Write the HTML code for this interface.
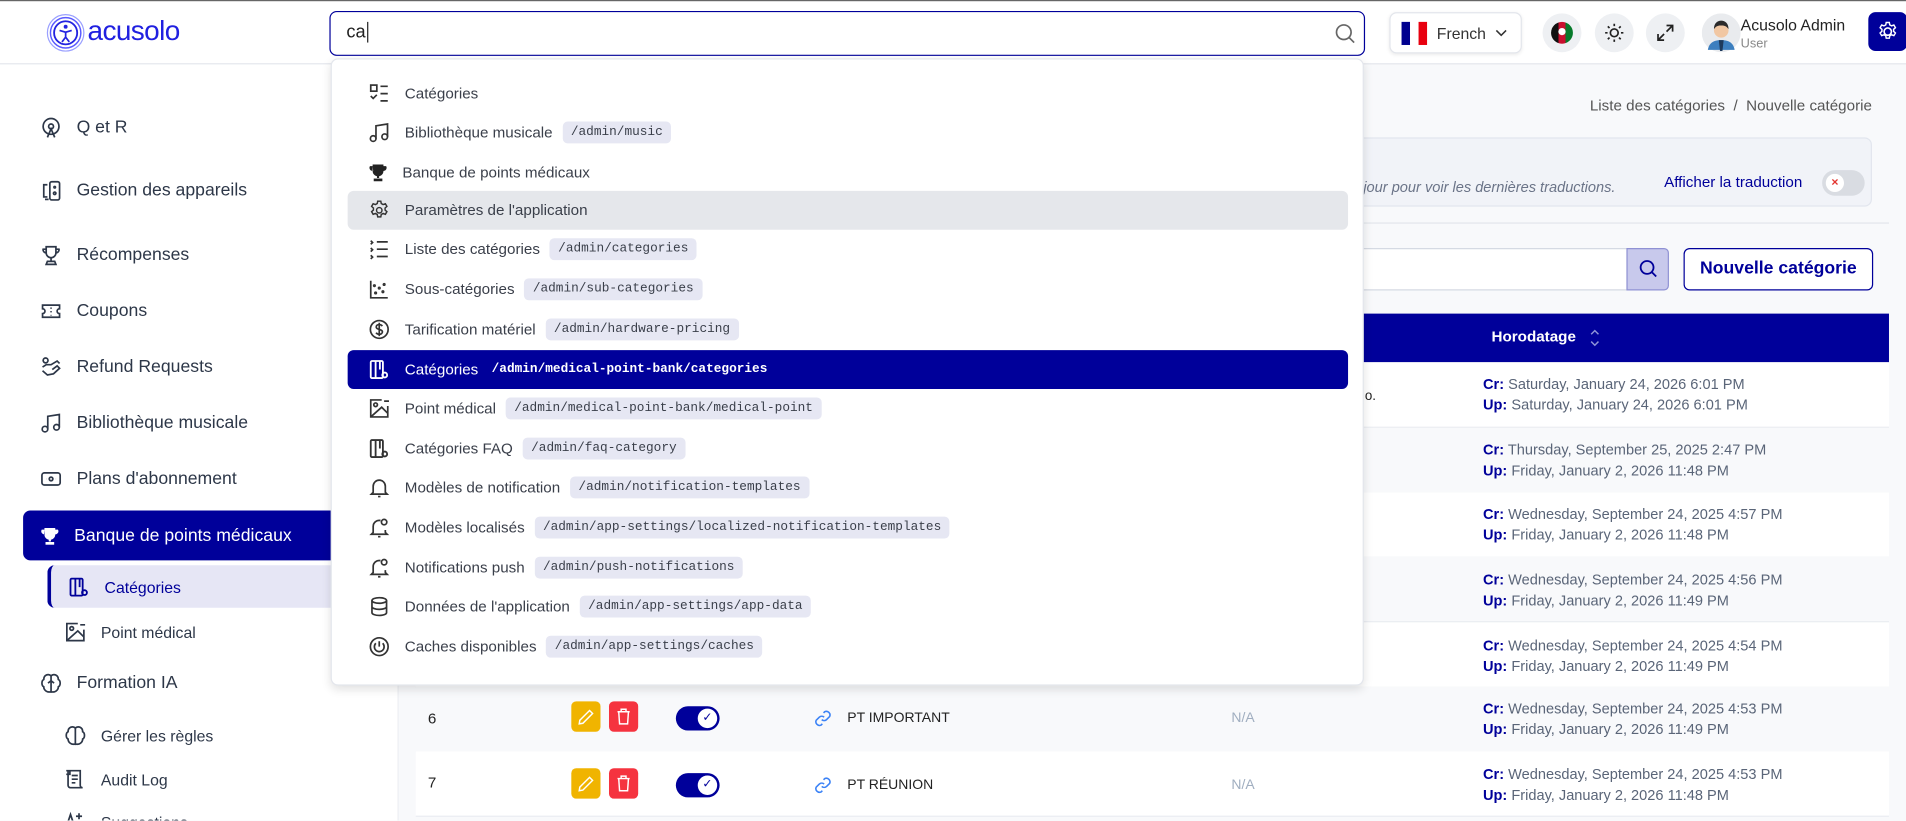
<!DOCTYPE html>
<html><head><meta charset="utf-8">
<style>
*{box-sizing:border-box;margin:0;padding:0}
html,body{width:1906px;height:821px;overflow:hidden;background:#f8f9fb}
#w{position:absolute;left:0;top:0;width:1568px;height:675px;transform:scale(1.21556);transform-origin:0 0;font-family:"Liberation Sans",sans-serif;color:#2d3748;background:#f8f9fb;overflow:hidden}
.abs{position:absolute}
svg{display:block}
.hdr{left:0;top:0;width:1568px;height:53px;background:#fff;border-bottom:1px solid #e3e6ec;border-top:1px solid #666}
.side{left:0;top:53px;width:328px;height:622px;background:#fff;border-right:1px solid #eceef2}
.si{position:absolute;left:33px;display:flex;align-items:center;font-size:14.5px;color:#2d3748;height:20px}
.si svg{margin-right:12px}
.dd{left:272px;top:48px;width:850px;height:516px;background:#fff;border:1px solid #e3e6ec;border-radius:6px;box-shadow:0 3px 8px rgba(0,0,0,.12)}
.it{position:absolute;left:13px;width:823px;height:32px;display:flex;align-items:center;padding-left:17px;font-size:12.5px;color:#3a3f4a;border-radius:5px}
.it svg{margin-right:12px;flex:none}
.bd{margin-left:8px;background:#e6e7f3;border-radius:4px;padding:3px 7px;font-family:"Liberation Mono",monospace;font-size:10.5px;color:#3a3f4a}
.row{position:absolute;left:342px;width:1212px;height:54px;border-bottom:1px solid #e9ecf1}
.ts{position:absolute;left:878px;font-size:12px;color:#5a6578;line-height:17px}
.ts b{color:#00009a}
</style></head><body><div id="w">
<!-- header -->
<div class="abs hdr">
 <svg class="abs" style="left:38px;top:10px" width="32" height="32" viewBox="0 0 32 32"><circle cx="16" cy="16" r="15" fill="none" stroke="#9aa0ff" stroke-width="1"/><circle cx="16" cy="16" r="12.5" fill="none" stroke="#5a5aff" stroke-width="1.2"/><circle cx="16" cy="16" r="9.5" fill="none" stroke="#2323e0" stroke-width="1.5"/><circle cx="16" cy="11" r="1.6" fill="#2323e0"/><path d="M11 14l5 1.5 5-1.5M16 15.5v4l-3 4M16 19.5l3 4" stroke="#2323e0" stroke-width="1.4" fill="none"/></svg>
 <div class="abs" style="left:72px;top:11px;font-size:23px;color:#2020e0;letter-spacing:-.5px">acusolo</div>
</div>
<div class="abs" style="left:271px;top:9px;width:852px;height:37px;border:1.5px solid #00009a;border-radius:6px;background:#fff">
 <div class="abs" style="left:13px;top:8px;font-size:15px;color:#222">ca<span style="border-left:1px solid #222;margin-left:1px"></span></div>
 <svg class="abs" style="left:826px;top:9px" width="17" height="17" viewBox="0 0 17 17"><circle cx="7.5" cy="7.5" r="6" fill="none" stroke="#666" stroke-width="1.4"/><path d="M12 12l4 4" stroke="#666" stroke-width="1.4"/></svg>
</div>
<div class="abs" style="left:1143px;top:10px;width:109px;height:34px;border:1px solid #e3e6ec;border-radius:6px;background:#fff;box-shadow:0 1px 3px rgba(0,0,0,.08)">
 <div class="abs" style="left:9px;top:7px;width:7px;height:19px;background:#00008f"></div>
 <div class="abs" style="left:16px;top:7px;width:7px;height:19px;background:#fff"></div>
 <div class="abs" style="left:23px;top:7px;width:7px;height:19px;background:#e8000f"></div>
 <div class="abs" style="left:38px;top:9px;font-size:13px;color:#333">French</div>
 <svg class="abs" style="left:86px;top:12px" width="10" height="8" viewBox="0 0 10 8"><path d="M1 2l4 4 4-4" stroke="#333" stroke-width="1.3" fill="none"/></svg>
</div>
<div class="abs" style="left:1269px;top:11px;width:32px;height:32px;border-radius:50%;background:#eef0f3"></div>
<div class="abs" style="left:1276px;top:18px;width:18px;height:18px;border-radius:50%;background:linear-gradient(90deg,#111 0 33%,#c8102e 33% 66%,#067a2a 66%)"></div>
<div class="abs" style="left:1282px;top:23px;width:6px;height:6px;border-radius:50%;background:#fff"></div>
<div class="abs" style="left:1312px;top:11px;width:32px;height:32px;border-radius:50%;background:#eef0f3"></div>
<svg class="abs" style="left:1319px;top:18px" width="18" height="18" viewBox="0 0 18 18"><circle cx="9" cy="9" r="3.2" fill="none" stroke="#222" stroke-width="1.4"/><path d="M9 1.5v2M9 14.5v2M1.5 9h2M14.5 9h2M3.7 3.7l1.4 1.4M12.9 12.9l1.4 1.4M3.7 14.3l1.4-1.4M12.9 5.1l1.4-1.4" stroke="#222" stroke-width="1.4"/></svg>
<div class="abs" style="left:1354px;top:11px;width:32px;height:32px;border-radius:50%;background:#eef0f3"></div>
<svg class="abs" style="left:1362px;top:19px" width="16" height="16" viewBox="0 0 16 16"><path d="M9 2h5v5M14 2L9 7M7 14H2V9M2 14l5-5" stroke="#222" stroke-width="1.4" fill="none"/></svg>
<svg class="abs" style="left:1400px;top:11px" width="32" height="32" viewBox="0 0 32 32"><circle cx="16" cy="16" r="16" fill="#e9ebee"/><path d="M5 30c1-6 5-8 11-8s10 2 11 8z" fill="#3d7fbf"/><path d="M14 22h4l-1 9h-2z" fill="#1e3a5c"/><circle cx="16" cy="14" r="6" fill="#f1c7a3"/><path d="M10 13c0-5 3-7 6-7s6 2 6 7c-2-3-4-3-6-3s-4 0-6 3z" fill="#2b2b2b"/></svg>
<div class="abs" style="left:1432px;top:13px;font-size:13px;color:#222;font-weight:500">Acusolo Admin</div>
<div class="abs" style="left:1432px;top:30px;font-size:10.5px;color:#888">User</div>
<div class="abs" style="left:1537px;top:10px;width:32px;height:32px;border-radius:6px;background:#00009a"></div>
<svg class="abs" style="left:1544px;top:17px" width="18" height="18" viewBox="0 0 24 24"><path d="M12 8a4 4 0 100 8 4 4 0 000-8z" fill="none" stroke="#fff" stroke-width="1.8"/><path d="M10.3 2h3.4l.5 2.6 2 1.1 2.5-.9 1.7 2.9-2 1.8v2.2l2 1.8-1.7 2.9-2.5-.9-2 1.1-.5 2.6h-3.4l-.5-2.6-2-1.1-2.5.9-1.7-2.9 2-1.8v-2.2l-2-1.8 1.7-2.9 2.5.9 2-1.1z" fill="none" stroke="#fff" stroke-width="1.6"/></svg>

<!-- sidebar -->
<div class="abs side"></div>
<div class="si" style="top:95px"><svg width="18" height="18" viewBox="0 0 18 18" fill="none" stroke="#2d3748" stroke-width="1.4"><circle cx="9" cy="8" r="6.5"/><circle cx="9" cy="8" r="2"/><path d="M6 17l3-7 3 7"/></svg>Q et R</div>
<div class="si" style="top:147px"><svg width="18" height="18" viewBox="0 0 18 18" fill="none" stroke="#2d3748" stroke-width="1.4"><rect x="8" y="1.5" width="8" height="15" rx="1.5"/><path d="M6 4H3v10h3M4 16h3"/><circle cx="12" cy="11" r="1"/><circle cx="12" cy="6" r=".6"/></svg>Gestion des appareils</div>
<div class="si" style="top:200px"><svg width="18" height="18" viewBox="0 0 18 18" fill="none" stroke="#2d3748" stroke-width="1.4"><path d="M5 2h8v5a4 4 0 01-8 0zM5 4H2.5a2.5 2.5 0 002.7 3M13 4h2.5a2.5 2.5 0 01-2.7 3M9 11v3M5 16.5h8l-1-2.5H6z"/></svg>Récompenses</div>
<div class="si" style="top:246px"><svg width="18" height="18" viewBox="0 0 18 18" fill="none" stroke="#2d3748" stroke-width="1.4"><path d="M2 4h14v3a2 2 0 000 4v3H2v-3a2 2 0 000-4z"/><path d="M9 6v1M9 9v1M9 12v.5"/></svg>Coupons</div>
<div class="si" style="top:292px"><svg width="18" height="18" viewBox="0 0 18 18" fill="none" stroke="#2d3748" stroke-width="1.4"><circle cx="4.5" cy="3.5" r="2"/><path d="M2 12l4 3.5 5-1 5-4.5-2-2-4 3M2 9l3-2h4l5-3 2 2"/></svg>Refund Requests</div>
<div class="si" style="top:338px"><svg width="18" height="18" viewBox="0 0 18 18" fill="none" stroke="#2d3748" stroke-width="1.4"><circle cx="4" cy="14" r="2.3"/><circle cx="13.5" cy="12.5" r="2.3"/><path d="M6.3 14V3.5L15.8 2v10.5"/></svg>Bibliothèque musicale</div>
<div class="si" style="top:384px"><svg width="18" height="18" viewBox="0 0 18 18" fill="none" stroke="#2d3748" stroke-width="1.4"><rect x="1.5" y="4" width="15" height="10" rx="2"/><circle cx="9" cy="9" r="1.5"/><path d="M5 9h.1M13 9h.1"/></svg>Plans d'abonnement</div>
<div class="abs" style="left:19px;top:420px;width:310px;height:41px;background:#00009a;border-radius:6px 0 0 6px"></div>
<div class="si" style="top:431px;left:33px;color:#fff;font-size:14.5px"><svg width="16" height="16" viewBox="0 0 18 18" fill="#fff"><path d="M4 1.5h10v6a5 5 0 01-10 0zM4 3H1.5a3 3 0 003 4.5M14 3h2.5a3 3 0 01-3 4.5"/><rect x="8" y="11" width="2" height="3"/><rect x="5" y="14.5" width="8" height="2.5"/></svg>Banque de points médicaux</div>
<div class="abs" style="left:39px;top:465px;width:290px;height:35px;background:#e6e6f5;border-left:3px solid #00009a;border-radius:6px 0 0 6px"></div>
<div class="si" style="top:473px;left:56px;color:#00009a;font-size:13px"><svg width="18" height="18" viewBox="0 0 18 18" fill="none" stroke="#00009a" stroke-width="1.5"><rect x="2" y="2" width="10" height="14" rx="1"/><path d="M6 2v14M9.5 2v7"/><circle cx="13.5" cy="13.5" r="2"/></svg>Catégories</div>
<div class="si" style="top:510px;left:53px;font-size:13px"><svg width="18" height="18" viewBox="0 0 18 18" fill="none" stroke="#2d3748" stroke-width="1.4"><path d="M11 2H2v14h14V7M13 3h4"/><circle cx="6" cy="6" r="1.5"/><path d="M2 16l9-8 5 5"/></svg>Point médical</div>
<div class="si" style="top:552px"><svg width="18" height="18" viewBox="0 0 18 18" fill="none" stroke="#2d3748" stroke-width="1.4"><path d="M9 2v15M9 3c-2-2-6-1-6 3-2 1-2 5 0 6 0 3 3 5 6 4M9 3c2-2 6-1 6 3 2 1 2 5 0 6 0 3-3 5-6 4M6.5 9L9 7l2.5 2"/></svg>Formation IA</div>
<div class="si" style="top:595px;left:53px;font-size:13px"><svg width="18" height="18" viewBox="0 0 18 18" fill="none" stroke="#2d3748" stroke-width="1.4"><path d="M9 2v15M9 3c-2-2-6-1-6 3-2 1-2 5 0 6 0 3 3 5 6 4M9 3c2-2 6-1 6 3 2 1 2 5 0 6 0 3-3 5-6 4"/></svg>Gérer les règles</div>
<div class="si" style="top:631px;left:53px;font-size:13px"><svg width="18" height="18" viewBox="0 0 18 18" fill="none" stroke="#2d3748" stroke-width="1.4"><path d="M3 2h10v12a2 2 0 002 2H5a2 2 0 01-2-2zM1.5 2h3v3h-3M6 6h5M6 9h5M6 12h3"/></svg>Audit Log</div>
<div class="si" style="top:666px;left:53px;font-size:13px"><svg width="18" height="18" viewBox="0 0 18 18" fill="none" stroke="#2d3748" stroke-width="1.4"><path d="M2 12l3-9 3 9M3 9h4M12 2v5M9.5 4.5h5"/></svg>Suggestions</div>

<!-- main -->
<div class="abs" style="right:28px;top:80px;font-size:12.5px;color:#555;white-space:nowrap">Liste des catégories &nbsp;/&nbsp; Nouvelle catégorie</div>
<div class="abs" style="left:342px;top:113px;width:1198px;height:57px;background:#f1f3f8;border:1px solid #e2e6ee;border-radius:6px">
 <div class="abs" style="right:210px;top:33px;font-size:12px;color:#6b7488;font-style:italic;white-space:nowrap">Cliquez sur le bouton de mise à jour pour voir les dernières traductions.</div>
 <div class="abs" style="left:1026px;top:29px;font-size:12.5px;color:#00009a;font-weight:500">Afficher la traduction</div>
 <div class="abs" style="left:1156px;top:26px;width:35px;height:21px;border-radius:11px;background:#d9dce2"></div>
 <div class="abs" style="left:1159px;top:29px;width:15px;height:15px;border-radius:50%;background:#fff;color:#e3342f;font-size:10px;text-align:center;line-height:15px;font-weight:bold">×</div>
</div>
<div class="abs" style="left:342px;top:183px;width:1212px;height:1px;background:#e3e6ec"></div>
<div class="abs" style="left:342px;top:204px;width:997px;height:35px;background:#fff;border:1px solid #d5dae3;border-radius:4px 0 0 4px"></div>
<div class="abs" style="left:1338px;top:204px;width:35px;height:35px;background:#c8c9ec;border:1px solid #9092d4;border-radius:0 4px 4px 0"></div>
<svg class="abs" style="left:1348px;top:213px" width="16" height="16" viewBox="0 0 16 16"><circle cx="7" cy="7" r="5.3" fill="none" stroke="#00009a" stroke-width="1.5"/><path d="M11 11l3.5 3.5" stroke="#00009a" stroke-width="1.5"/></svg>
<div class="abs" style="left:1385px;top:204px;width:156px;height:35px;background:#fff;border:1.3px solid #00009a;border-radius:5px;color:#00009a;font-weight:bold;font-size:14.5px;text-align:center;line-height:33px">Nouvelle catégorie</div>
<div class="abs" style="left:342px;top:258px;width:1212px;height:40px;background:#00009a">
 <div class="abs" style="left:885px;top:12px;color:#fff;font-weight:bold;font-size:12.5px">Horodatage</div>
 <svg class="abs" style="left:965px;top:11px" width="10" height="18" viewBox="0 0 10 18"><path d="M2 6l3-3 3 3M2 12l3 3 3-3" stroke="#8f94d8" stroke-width="1.2" fill="none"/></svg>
</div>
<div class="row" style="top:298px;background:#fff"><div class="abs" style="right:422px;top:22px;font-size:11px;color:#222;white-space:nowrap">consectetur adipiscing elit o.</div><div class="ts" style="top:10px"><b>Cr:</b> Saturday, January 24, 2026 6:01 PM<br><b>Up:</b> Saturday, January 24, 2026 6:01 PM</div></div>
<div class="row" style="top:352px;background:#f8f9fb"><div class="ts" style="top:10px"><b>Cr:</b> Thursday, September 25, 2025 2:47 PM<br><b>Up:</b> Friday, January 2, 2026 11:48 PM</div></div>
<div class="row" style="top:405px;background:#fff"><div class="ts" style="top:10px"><b>Cr:</b> Wednesday, September 24, 2025 4:57 PM<br><b>Up:</b> Friday, January 2, 2026 11:48 PM</div></div>
<div class="row" style="top:458px;background:#f8f9fb"><div class="ts" style="top:11px"><b>Cr:</b> Wednesday, September 24, 2025 4:56 PM<br><b>Up:</b> Friday, January 2, 2026 11:49 PM</div></div>
<div class="row" style="top:512px;background:#fff"><div class="ts" style="top:11px"><b>Cr:</b> Wednesday, September 24, 2025 4:54 PM<br><b>Up:</b> Friday, January 2, 2026 11:49 PM</div></div>
<div class="row" style="top:565px;background:#f8f9fb">
 <div class="abs" style="left:10px;top:19px;font-size:12.5px;color:#222">6</div>
 <div class="abs" style="left:128px;top:12px;width:24px;height:25px;background:#f0b400;border-radius:4px"></div>
 <svg class="abs" style="left:133px;top:18px" width="14" height="14" viewBox="0 0 14 14"><path d="M10 1.5l2.5 2.5L4.5 12 1.5 12.5 2 9.5z" fill="none" stroke="#fff" stroke-width="1.2"/></svg>
 <div class="abs" style="left:159px;top:12px;width:24px;height:25px;background:#f5333f;border-radius:4px"></div>
 <svg class="abs" style="left:164px;top:17px" width="14" height="15" viewBox="0 0 14 15"><path d="M2 3.5h10M5 3.5V1.5h4v2M3 3.5l.7 10h6.6l.7-10" fill="none" stroke="#fff" stroke-width="1.2"/></svg>
 <div class="abs" style="left:214px;top:16px;width:36px;height:20px;background:#00009a;border-radius:10px"></div>
 <div class="abs" style="left:232px;top:18px;width:16px;height:16px;background:#fff;border-radius:50%;color:#00009a;font-size:10px;text-align:center;line-height:16px">✓</div>
 <svg class="abs" style="left:328px;top:19px" width="14" height="14" viewBox="0 0 14 14"><path d="M6 8a3 3 0 004 0l2.5-2.5a3 3 0 00-4-4L7.5 2.5M8 6a3 3 0 00-4 0L1.5 8.5a3 3 0 004 4l1-1" fill="none" stroke="#3b82f6" stroke-width="1.3"/></svg>
 <div class="abs" style="left:355px;top:20px;font-size:11.5px;color:#222">PT IMPORTANT</div>
 <div class="abs" style="left:671px;top:20px;font-size:11.5px;color:#a0aec0">N/A</div>
 <div class="ts" style="top:10px"><b>Cr:</b> Wednesday, September 24, 2025 4:53 PM<br><b>Up:</b> Friday, January 2, 2026 11:49 PM</div>
</div>
<div class="row" style="top:618px;background:#fff">
 <div class="abs" style="left:10px;top:19px;font-size:12.5px;color:#222">7</div>
 <div class="abs" style="left:128px;top:14px;width:24px;height:25px;background:#f0b400;border-radius:4px"></div>
 <svg class="abs" style="left:133px;top:20px" width="14" height="14" viewBox="0 0 14 14"><path d="M10 1.5l2.5 2.5L4.5 12 1.5 12.5 2 9.5z" fill="none" stroke="#fff" stroke-width="1.2"/></svg>
 <div class="abs" style="left:159px;top:14px;width:24px;height:25px;background:#f5333f;border-radius:4px"></div>
 <svg class="abs" style="left:164px;top:19px" width="14" height="15" viewBox="0 0 14 15"><path d="M2 3.5h10M5 3.5V1.5h4v2M3 3.5l.7 10h6.6l.7-10" fill="none" stroke="#fff" stroke-width="1.2"/></svg>
 <div class="abs" style="left:214px;top:18px;width:36px;height:20px;background:#00009a;border-radius:10px"></div>
 <div class="abs" style="left:232px;top:20px;width:16px;height:16px;background:#fff;border-radius:50%;color:#00009a;font-size:10px;text-align:center;line-height:16px">✓</div>
 <svg class="abs" style="left:328px;top:21px" width="14" height="14" viewBox="0 0 14 14"><path d="M6 8a3 3 0 004 0l2.5-2.5a3 3 0 00-4-4L7.5 2.5M8 6a3 3 0 00-4 0L1.5 8.5a3 3 0 004 4l1-1" fill="none" stroke="#3b82f6" stroke-width="1.3"/></svg>
 <div class="abs" style="left:355px;top:22px;font-size:11.5px;color:#222">PT RÉUNION</div>
 <div class="abs" style="left:671px;top:22px;font-size:11.5px;color:#a0aec0">N/A</div>
 <div class="ts" style="top:11px"><b>Cr:</b> Wednesday, September 24, 2025 4:53 PM<br><b>Up:</b> Friday, January 2, 2026 11:48 PM</div>
</div>

<!-- dropdown -->
<div class="abs dd">
 <div class="it" style="top:12px"><svg width="18" height="18" viewBox="0 0 18 18" fill="none" stroke="#333" stroke-width="1.4"><rect x="2" y="2" width="5" height="5"/><path d="M2 11l2 2 3-3M10 3h6M10 9h6M10 15h6"/></svg>Catégories</div>
 <div class="it" style="top:44px"><svg width="18" height="18" viewBox="0 0 18 18" fill="none" stroke="#333" stroke-width="1.4"><circle cx="4" cy="14" r="2.3"/><circle cx="13.5" cy="12.5" r="2.3"/><path d="M6.3 14V3.5L15.8 2v10.5"/></svg>Bibliothèque musicale<span class="bd">/admin/music</span></div>
 <div class="it" style="top:77px"><svg width="16" height="16" viewBox="0 0 18 18" fill="#222"><path d="M4 1.5h10v6a5 5 0 01-10 0zM4 3H1.5a3 3 0 003 4.5M14 3h2.5a3 3 0 01-3 4.5"/><rect x="8" y="11" width="2" height="3"/><rect x="5" y="14.5" width="8" height="2.5"/></svg>Banque de points médicaux</div>
 <div class="it" style="top:108px;background:#e5e7eb"><svg width="18" height="18" viewBox="0 0 24 24" fill="none" stroke="#333" stroke-width="1.6"><circle cx="12" cy="12" r="3"/><path d="M10.3 2h3.4l.5 2.6 2 1.1 2.5-.9 1.7 2.9-2 1.8v2.2l2 1.8-1.7 2.9-2.5-.9-2 1.1-.5 2.6h-3.4l-.5-2.6-2-1.1-2.5.9-1.7-2.9 2-1.8v-2.2l-2-1.8 1.7-2.9 2.5.9 2-1.1z"/></svg>Paramètres de l'application</div>
 <div class="it" style="top:140px"><svg width="18" height="18" viewBox="0 0 18 18" fill="none" stroke="#333" stroke-width="1.4"><path d="M7 3h9M7 9h9M7 15h9M2 2l1.5 1.5L2 5M2 8l1.5 1.5L2 11M2 14l1.5 1.5L2 17"/></svg>Liste des catégories<span class="bd">/admin/categories</span></div>
 <div class="it" style="top:173px"><svg width="18" height="18" viewBox="0 0 18 18" fill="none" stroke="#333" stroke-width="1.4"><path d="M2 2v14h14"/><circle cx="6" cy="12" r=".6"/><circle cx="9" cy="8" r=".6"/><circle cx="12" cy="11" r=".6"/><circle cx="13" cy="5" r=".6"/><circle cx="5" cy="6" r=".6"/></svg>Sous-catégories<span class="bd">/admin/sub-categories</span></div>
 <div class="it" style="top:206px"><svg width="18" height="18" viewBox="0 0 18 18" fill="none" stroke="#333" stroke-width="1.4"><circle cx="9" cy="9" r="7.3"/><path d="M11.5 6.3C11 5.5 10 5 9 5 7.5 5 6.5 5.8 6.5 7s1 1.6 2.5 2 2.6.8 2.6 2-1.1 2-2.6 2c-1.1 0-2.1-.5-2.6-1.3M9 3.5v11"/></svg>Tarification matériel<span class="bd">/admin/hardware-pricing</span></div>
 <div class="it" style="top:239px;background:#00009a;color:#fff;font-weight:500"><svg width="18" height="18" viewBox="0 0 18 18" fill="none" stroke="#fff" stroke-width="1.5"><rect x="2" y="2" width="10" height="14" rx="1"/><path d="M6 2v14M9.5 2v7"/><circle cx="13.5" cy="13.5" r="2"/></svg>Catégories<span class="bd" style="background:none;color:#fff;font-weight:bold;margin-left:4px">/admin/medical-point-bank/categories</span></div>
 <div class="it" style="top:271px"><svg width="18" height="18" viewBox="0 0 18 18" fill="none" stroke="#333" stroke-width="1.4"><path d="M11 2H2v14h14V7M13 3h4"/><circle cx="6" cy="6" r="1.5"/><path d="M2 16l9-8 5 5"/></svg>Point médical<span class="bd">/admin/medical-point-bank/medical-point</span></div>
 <div class="it" style="top:304px"><svg width="18" height="18" viewBox="0 0 18 18" fill="none" stroke="#333" stroke-width="1.5"><rect x="2" y="2" width="10" height="14" rx="1"/><path d="M6 2v14M9.5 2v7"/><circle cx="13.5" cy="13.5" r="2"/></svg>Catégories FAQ<span class="bd">/admin/faq-category</span></div>
 <div class="it" style="top:336px"><svg width="18" height="18" viewBox="0 0 18 18" fill="none" stroke="#333" stroke-width="1.4"><path d="M4 13V8a5 5 0 0110 0v5l1.5 1.5h-13zM8 16.5h2"/></svg>Modèles de notification<span class="bd">/admin/notification-templates</span></div>
 <div class="it" style="top:369px"><svg width="18" height="18" viewBox="0 0 18 18" fill="none" stroke="#333" stroke-width="1.4"><path d="M10 3.2A5 5 0 004 8v5l-1.5 1.5h13L14 13v-2M8 16.5h2"/><circle cx="13" cy="4.5" r="2.2"/></svg>Modèles localisés<span class="bd">/admin/app-settings/localized-notification-templates</span></div>
 <div class="it" style="top:402px"><svg width="18" height="18" viewBox="0 0 18 18" fill="none" stroke="#333" stroke-width="1.4"><path d="M10 3.2A5 5 0 004 8v5l-1.5 1.5h13L14 13v-2M8 16.5h2"/><circle cx="13" cy="4.5" r="2.2"/></svg>Notifications push<span class="bd">/admin/push-notifications</span></div>
 <div class="it" style="top:434px"><svg width="18" height="18" viewBox="0 0 18 18" fill="none" stroke="#333" stroke-width="1.4"><ellipse cx="9" cy="4" rx="6" ry="2.3"/><path d="M3 4v10c0 1.3 2.7 2.3 6 2.3s6-1 6-2.3V4M3 9c0 1.3 2.7 2.3 6 2.3s6-1 6-2.3"/></svg>Données de l'application<span class="bd">/admin/app-settings/app-data</span></div>
 <div class="it" style="top:467px"><svg width="18" height="18" viewBox="0 0 18 18" fill="none" stroke="#333" stroke-width="1.4"><circle cx="9" cy="9" r="7.3"/><path d="M9 4.5V9M6.2 6.2a4 4 0 105.6 0"/></svg>Caches disponibles<span class="bd">/admin/app-settings/caches</span></div>
</div>
</div></body></html>
